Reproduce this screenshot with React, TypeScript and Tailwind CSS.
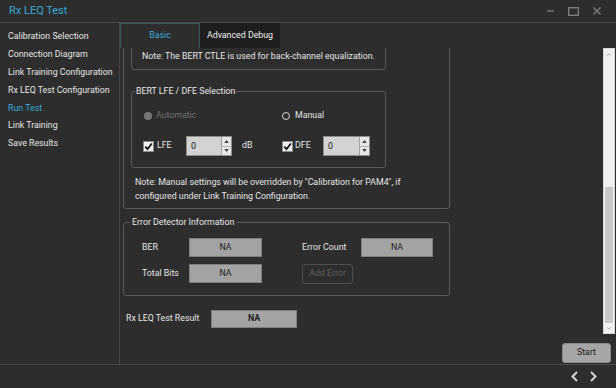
import { useState } from 'react';

const navItems = [
  'Calibration Selection',
  'Connection Diagram',
  'Link Training Configuration',
  'Rx LEQ Test Configuration',
  'Run Test',
  'Link Training',
  'Save Results',
];

function CheckBox() {
  return (
    <span className="flex h-[11px] w-[11px] shrink-0 items-center justify-center border border-[#8a8a8a] bg-[#f2f2f2]">
      <svg viewBox="0 0 10 10" className="h-[9px] w-[9px]">
        <path d="M1.4 5.2 L3.9 7.9 L8.7 1.6" fill="none" stroke="#111" strokeWidth="1.9" />
      </svg>
    </span>
  );
}

function SpinBox({ className }: { className: string }) {
  return (
    <div className={`flex h-[20px] border border-[#8e8e8e] bg-[#d3d3d3] ${className}`}>
      <div className="flex-1 pl-[4px] leading-[18px] text-[#111]">0</div>
      <div className="flex w-[10px] flex-col border-l border-[#a4a4a4] bg-[#e6e6e6]">
        <div className="flex flex-1 items-center justify-center border-b border-[#b8b8b8]">
          <svg viewBox="0 0 6 4" className="h-[3px] w-[5px]"><path d="M0 4 L3 0 L6 4 Z" fill="#444" /></svg>
        </div>
        <div className="flex flex-1 items-center justify-center">
          <svg viewBox="0 0 6 4" className="h-[3px] w-[5px]"><path d="M0 0 L3 4 L6 0 Z" fill="#444" /></svg>
        </div>
      </div>
    </div>
  );
}

function Field({ className, bold }: { className: string; bold?: boolean }) {
  return (
    <div className={`flex items-center justify-center border border-[#7e7e7e] bg-[#a3a3a3] text-[#1c1c1c] ${bold ? 'font-bold' : ''} ${className}`}>
      NA
    </div>
  );
}

export default function App() {
  const [tab, setTab] = useState('basic');

  return (
    <div className="flex h-[388px] w-[616px] flex-col overflow-hidden bg-[#2d2d2d] font-['Roboto',sans-serif] text-[8.8px] text-[#e6e6e6]">
      {/* title bar */}
      <div className="flex h-[23px] shrink-0 items-center justify-between border-b border-[#4a4a4a] pl-[9px] pr-[15px]">
        <span className="text-[11px] text-[#36a9d6]">Rx LEQ Test</span>
        <div className="flex items-center gap-[14px]">
          <svg viewBox="0 0 7 2" className="h-[2px] w-[7px]"><path d="M0 1 H7" stroke="#7c7c7c" strokeWidth="1.4" /></svg>
          <svg viewBox="0 0 11 9" className="h-[9px] w-[11px]"><rect x="0.7" y="0.7" width="9.6" height="7.6" fill="none" stroke="#7c7c7c" strokeWidth="1.4" /></svg>
          <svg viewBox="0 0 8 8" className="h-[8px] w-[8px]"><path d="M0.5 0.5 L7.5 7.5 M7.5 0.5 L0.5 7.5" stroke="#7c7c7c" strokeWidth="1.3" /></svg>
        </div>
      </div>

      <div className="flex min-h-0 flex-1">
        {/* sidebar */}
        <div className="w-[120px] shrink-0 border-r border-[#474747] pt-[5px]">
          {navItems.map((item) => (
            <div
              key={item}
              className={`h-[17.9px] whitespace-nowrap pl-[8px] leading-[17.9px] ${item === 'Run Test' ? 'text-[#36a9d6]' : 'text-[#e6e6e6]'}`}
            >
              {item}
            </div>
          ))}
        </div>

        {/* content */}
        <div className="flex min-w-0 flex-1 flex-col">
          <div className="flex h-[25px] shrink-0">
            <button
              type="button"
              onClick={() => setTab('basic')}
              className="w-[80px] border border-b-0 border-[#3b5663] text-[#36a9d6]"
            >
              Basic
            </button>
            <button
              type="button"
              onClick={() => setTab('debug')}
              className="w-[80px] bg-[#1e1e1e] text-[#eeeeee]"
            >
              Advanced Debug
            </button>
          </div>

          <div className="flex h-[286px] shrink-0">
            <div className="min-w-0 flex-1 overflow-hidden">
              <div className="-mt-[10px]">
                {/* outer group */}
                <div className="ml-[3px] w-[327px] rounded-[3px] border border-[#5a5a5a] px-[7px] pb-[5px] pt-[4px]">
                  <div className="flex h-[27px] w-[255px] items-center rounded-[3px] border border-[#5a5a5a] pl-[10px]">
                    Note: The BERT CTLE is used for back-channel equalization.
                  </div>

                  <fieldset className="mt-[15px] w-[255px] rounded-[3px] border border-[#5a5a5a] pb-[11px]">
                    <legend className="ml-[3px] px-[1px] leading-[12px]">BERT LFE / DFE Selection</legend>
                    <div className="mt-[12px] flex h-[14px] items-center pl-[11px]">
                      <div className="flex w-[139px] items-center">
                        <span className="ml-[1px] h-[8px] w-[8px] rounded-full bg-[#767676]" />
                        <span className="ml-[4px] text-[#727272]">Automatic</span>
                      </div>
                      <div className="flex items-center">
                        <span className="h-[8px] w-[8px] rounded-full border-[1.5px] border-[#d8d8d8] bg-[#2d2d2d]" />
                        <span className="ml-[5px]">Manual</span>
                      </div>
                    </div>
                    <div className="mt-[13px] flex h-[20px] items-center pl-[11px]">
                      <div className="flex w-[139px] items-center">
                        <CheckBox />
                        <span className="ml-[3px] w-[29px]">LFE</span>
                        <SpinBox className="w-[46px]" />
                        <span className="ml-[10px]">dB</span>
                      </div>
                      <div className="flex items-center">
                        <CheckBox />
                        <span className="ml-[2px] w-[28px]">DFE</span>
                        <SpinBox className="w-[47px]" />
                      </div>
                    </div>
                  </fieldset>

                  <p className="mt-[7px] pl-[4px] leading-[14px]">
                    Note: Manual settings will be overridden by "Calibration for PAM4", if
                    <br />
                    configured under Link Training Configuration.
                  </p>
                </div>

                {/* error detector */}
                <fieldset className="ml-[3px] mt-[7px] w-[327px] rounded-[3px] border border-[#5a5a5a] pb-[11px]">
                  <legend className="ml-[6px] px-[2px] leading-[12px]">Error Detector Information</legend>
                  <div className="mt-[10px] flex items-center pl-[18px]">
                    <span className="w-[47px]">BER</span>
                    <Field className="h-[19px] w-[73px]" />
                    <span className="ml-[40px] w-[59px]">Error Count</span>
                    <Field className="h-[19px] w-[72px]" />
                  </div>
                  <div className="mt-[7px] flex items-start pl-[18px]">
                    <span className="flex h-[19px] w-[47px] items-center">Total Bits</span>
                    <Field className="h-[19px] w-[73px]" />
                    <button
                      type="button"
                      disabled
                      className="ml-[40px] h-[20px] w-[51px] rounded-[3px] border border-[#4e4e4e] text-[#5f5f5f]"
                    >
                      Add Error
                    </button>
                  </div>
                </fieldset>

                <div className="ml-[6px] mt-[14px] flex items-center">
                  <span className="w-[85px]">Rx LEQ Test Result</span>
                  <Field className="h-[18px] w-[86px]" bold />
                </div>
              </div>
            </div>

            {/* scrollbar */}
            <div className="mr-[1px] flex w-[12px] flex-col border border-[#d8d8d8] bg-[#f0f0f0]">
              <div className="flex h-[10px] items-center justify-center">
                <svg viewBox="0 0 6 4" className="h-[3px] w-[6px]"><path d="M0.5 3.5 L3 1 L5.5 3.5" fill="none" stroke="#9a9a9a" strokeWidth="1" /></svg>
              </div>
              <div className="h-[128px]" />
              <div className="mx-[1px] flex-1 bg-[#c9c9c9]" />
              <div className="flex h-[10px] items-center justify-center">
                <svg viewBox="0 0 6 4" className="h-[3px] w-[6px]"><path d="M0.5 0.5 L3 3 L5.5 0.5" fill="none" stroke="#9a9a9a" strokeWidth="1" /></svg>
              </div>
            </div>
          </div>

          <div className="flex justify-end pr-[5px] pt-[9px]">
            <button
              type="button"
              className="h-[20px] w-[49px] rounded-[3px] border border-[#8a8a8a] bg-[#a6a6a6] text-[#1a1a1a]"
            >
              Start
            </button>
          </div>
        </div>
      </div>

      {/* bottom bar */}
      <div className="flex h-[24px] shrink-0 items-center justify-end gap-[12px] border-t border-[#4a4a4a] pr-[19px]">
        <svg viewBox="0 0 7 11" className="h-[11px] w-[7px]"><path d="M6 1 L1.5 5.5 L6 10" fill="none" stroke="#d6d6d6" strokeWidth="2" /></svg>
        <svg viewBox="0 0 7 11" className="h-[11px] w-[7px]"><path d="M1 1 L5.5 5.5 L1 10" fill="none" stroke="#d6d6d6" strokeWidth="2" /></svg>
      </div>
    </div>
  );
}
